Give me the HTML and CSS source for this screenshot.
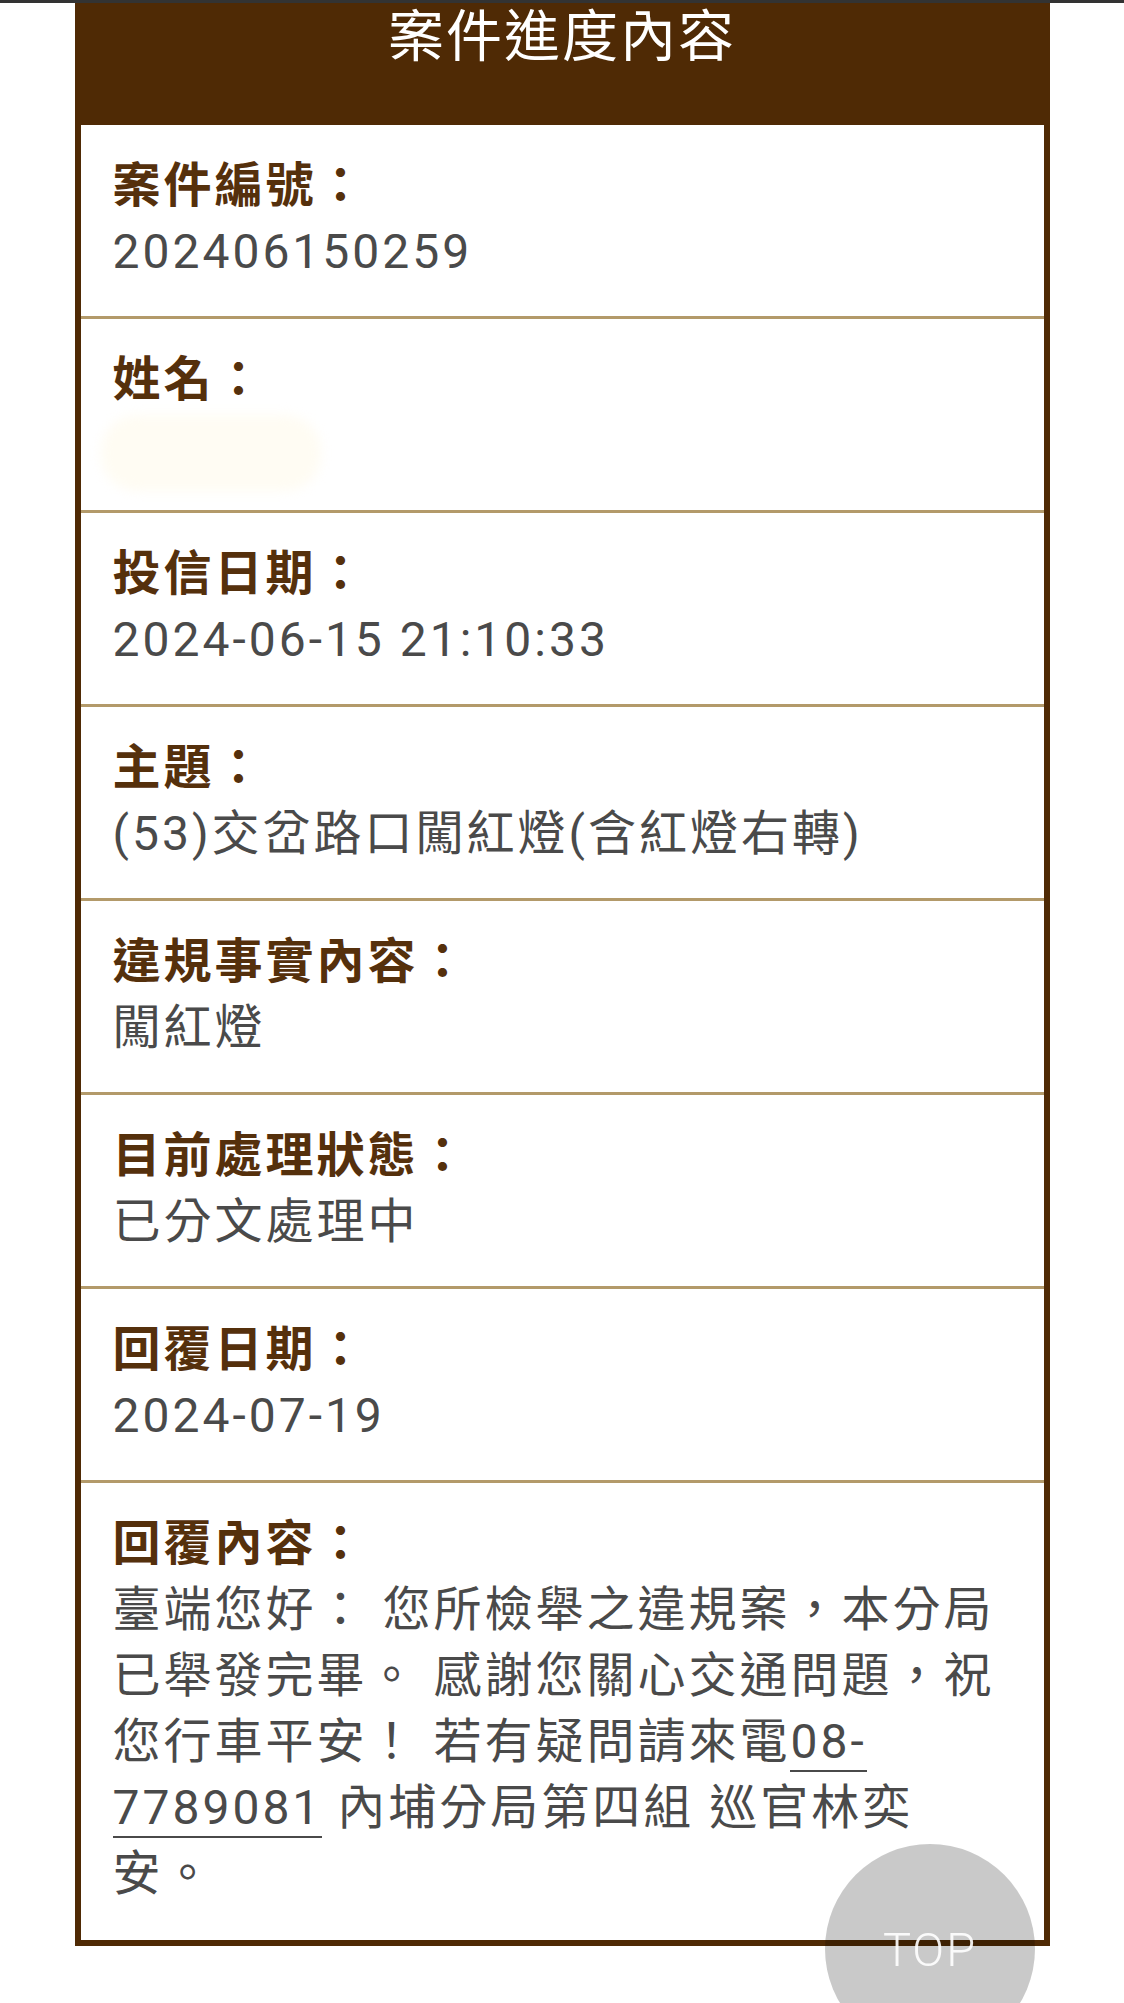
FILE: index.html
```html
<!DOCTYPE html>
<html>
<head>
    <meta charset="utf-8">
    <meta name="viewport" content="width=device-width, initial-scale=1.0">
    <title>案件進度內容</title>
    <link rel="stylesheet" href="styles.css">
</head>
<body>
    <div class="case">
        <h1 class="case-title">案件進度內容</h1>

        <div class="row">
            <div class="label">案件編號：</div>
            <div class="value">202406150259</div>
        </div>
        <div class="row">
            <div class="label">姓名：</div>
            <div class="value"><span class="masked"></span></div>
        </div>
        <div class="row">
            <div class="label">投信日期：</div>
            <div class="value">2024-06-15 21:10:33</div>
        </div>
        <div class="row">
            <div class="label">主題：</div>
            <div class="value">(53)交岔路口闖紅燈(含紅燈右轉)</div>
        </div>
        <div class="row">
            <div class="label">違規事實內容：</div>
            <div class="value">闖紅燈</div>
        </div>
        <div class="row">
            <div class="label">目前處理狀態：</div>
            <div class="value">已分文處理中</div>
        </div>
        <div class="row">
            <div class="label">回覆日期：</div>
            <div class="value">2024-07-19</div>
        </div>
        <div class="row last">
            <div class="label">回覆內容：</div>
            <div class="value">臺端您好： 您所檢舉之違規案，本分局已舉發完畢。 感謝您關心交通問題，祝您行車平安！ 若有疑問請來電<a class="tel" href="tel:087789081">08-<wbr>7789081</a> 內埔分局第四組 巡官林奕安。</div>
        </div>
    </div>

    <a class="top" href="#">TOP</a>
</body>
</html>
```

FILE: styles.css
```css
body {
    margin: 0;
    border-top: 3px solid #333;
    background: #fff;
    font-family: Roboto, "Noto Sans CJK TC", sans-serif;
}
.case {
    width: 975px;
    margin: 0 auto;
    box-sizing: border-box;
    border: 6px solid #4f2a05;
    border-top: none;
    background: #fff;
}
.case-title {
    margin: 0 -6px;
    padding: 0 0 64px;
    background: #4f2a05;
    color: #fff;
    text-align: center;
    font-family: "Noto Sans CJK TC", sans-serif;
    font-size: 56px;
    font-weight: normal;
    line-height: 58px;
    letter-spacing: 2px;
}
.row {
    padding: 28px 39px 31px 32px;
    border-bottom: 3px solid #b39a6a;
    font-size: 48px;
    line-height: 66px;
    letter-spacing: 3px;
}
.row.last {
    border-bottom: none;
    padding-bottom: 33px;
}
.label {
    color: #55300c;
    font-weight: bold;
}
.value {
    color: #4a4a4a;
    min-height: 66px;
}
.masked {
    display: inline-block;
    vertical-align: top;
    width: 220px;
    height: 76px;
    margin: 2px 0 -12px -12px;
    border-radius: 36px;
    background: #fffcf3;
    filter: blur(6px);
}
.tel {
    color: inherit;
    text-decoration: none;
    border-bottom: 2px solid #4a4a4a;
}
.top {
    position: fixed;
    right: 89px;
    bottom: -51px;
    width: 210px;
    height: 210px;
    border-radius: 50%;
    background: rgba(0, 0, 0, 0.21);
    color: rgba(255, 255, 255, 0.9);
    display: flex;
    justify-content: center;
    align-items: center;
    font-family: Roboto, sans-serif;
    font-weight: 300;
    font-size: 47px;
    letter-spacing: 2px;
    text-decoration: none;
}
```
